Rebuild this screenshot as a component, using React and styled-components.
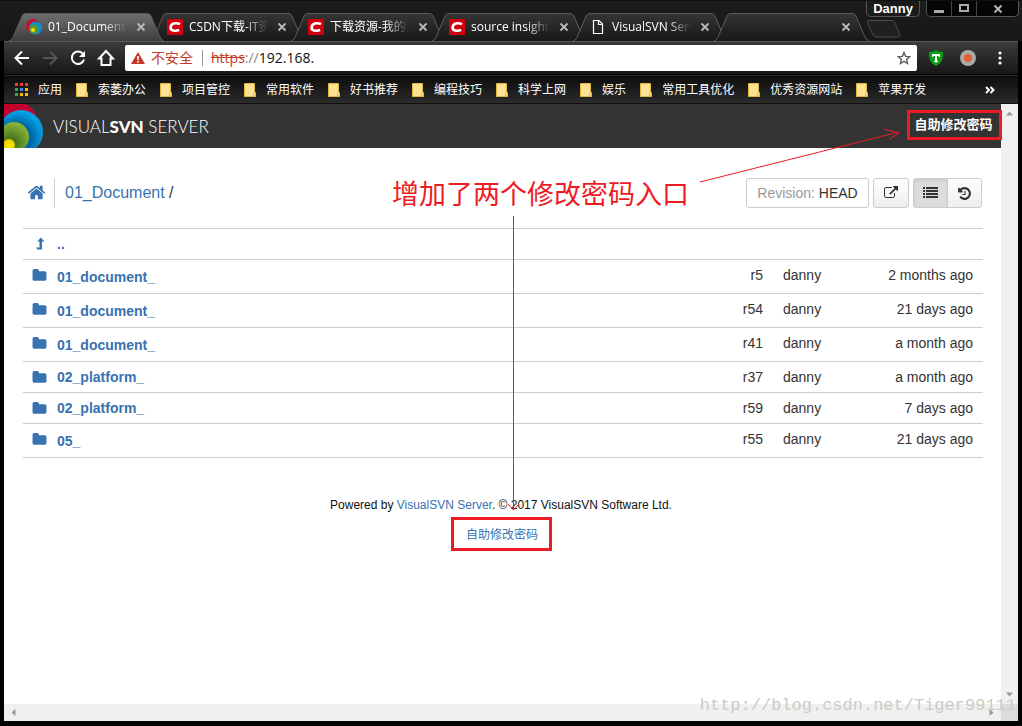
import React from "react";
import styled, { createGlobalStyle, css } from "styled-components";

const ui = `"Open Sans", "Noto Sans", "Noto Sans CJK SC", sans-serif`;
const page = `"Liberation Sans", "Noto Sans CJK SC", sans-serif`;
const link = "#3872b0";
const rule = "#ccc";
const red = "#ed1c24";

const Global = createGlobalStyle`
  * { box-sizing: border-box; }
  body { margin: 0; background: #000; }
  button { font: inherit; color: inherit; cursor: pointer; }
  a { text-decoration: none; }
`;

const Window = styled.div`
  min-height: 100vh;
  display: flex;
  flex-direction: column;
  padding: 0 4px 5px;
  background: #000;
  border-top: 1px solid #111;
  font: 13px/20px ${ui};
  color: #fff;
`;

/* ---------- title bar and tabs ---------- */
const TitleBar = styled.header`
  display: flex;
  align-items: flex-start;
  height: 40px;
  margin: 0 -4px;
  padding-left: 8px;
  background: linear-gradient(#1c1c1c, #171717);
`;
const TabList = styled.nav`
  display: flex;
  align-items: flex-end;
  height: 40px;
  flex: 1;
  min-width: 0;
`;
const TabBox = styled.div`
  display: flex;
  align-items: center;
  flex: 0 0 157px;
  min-width: 0;
  height: 28px;
  margin-right: -16px;
  padding: 0 14px 0 18px;
  position: relative;
  z-index: ${(p) => (p.$active ? 1 : 0)};
`;
const TabShape = styled.svg`
  position: absolute;
  inset: 0;
  width: 100%;
  height: 100%;
  z-index: -1;
`;
const TabIcon = styled.span`
  display: flex;
  width: 16px;
  height: 16px;
  flex: none;
`;
const TabTitle = styled.a`
  flex: 1 1 0;
  min-width: 0;
  margin: 0 4px 0 6px;
  color: #fff;
  font-size: 12px;
  line-height: 20px;
  white-space: nowrap;
  overflow: hidden;
  mask-image: linear-gradient(90deg, #000 70%, transparent);
`;
const IconButton = styled.button`
  display: flex;
  align-items: center;
  justify-content: center;
  flex: none;
  width: ${(p) => p.$w || 28}px;
  height: ${(p) => p.$h || 28}px;
  padding: 0;
  border: 0;
  background: none;
`;
const NewTab = styled(IconButton)`
  margin: 0 0 3px 12px;
`;
const Profile = styled.button`
  flex: none;
  width: 54px;
  height: 16px;
  margin-right: 6px;
  padding: 0;
  border: 1px solid #555;
  border-top: 0;
  border-radius: 0 0 5px 5px;
  background: #1b1b1b;
  font: bold 13px/15px ${page};
`;
const WindowButtons = styled.div`
  display: flex;
  flex: none;
  height: 16px;
  margin-right: 3px;
  border: 1px solid #555;
  border-top: 0;
  border-radius: 0 0 5px 5px;
  background: #050505;
`;
const WindowButton = styled(IconButton)`
  border-left: ${(p) => (p.$first ? 0 : "1px solid #444")};
`;

/* ---------- toolbar ---------- */
const Toolbar = styled.div`
  display: flex;
  align-items: center;
  height: 34px;
  padding: 0 3px 0 4px;
  border-top: 1px solid #5a5a5a;
  border-bottom: 1px solid #000;
  background: linear-gradient(#3b3b3b, #171717);
`;
const Address = styled.div`
  display: flex;
  align-items: center;
  flex: 1;
  height: 26px;
  margin: 0 4px 0 5px;
  padding: 0 6px 0 5px;
  border-radius: 2px;
  background: #fff;
  color: #c53929;
  font-size: 14px;
`;
const Unsafe = styled.span`
  margin: 0 8px 0 5px;
  padding-right: 9px;
  border-right: 1px solid #999;
  line-height: 16px;
`;
const Url = styled.span`
  flex: 1;
  color: #111;
  s { color: #c53929; }
  i { font-style: normal; color: #888; }
`;

/* ---------- bookmarks ---------- */
const Bookmarks = styled.nav`
  display: flex;
  align-items: center;
  height: 29px;
  padding: 0 14px 0 11px;
  border-top: 1px solid #2c2c2c;
  border-bottom: 1px solid #111;
  background: linear-gradient(#0d0d0d, #2b2b2b);
  overflow: hidden;
`;
const Bookmark = styled.a`
  display: flex;
  align-items: center;
  gap: 10px;
  flex: none;
  margin-right: 14px;
  color: #fff;
  font-size: 12px;
  line-height: 20px;
  svg { flex: none; }
`;
const More = styled(IconButton)`
  margin-left: auto;
`;

/* ---------- viewport ---------- */
const Viewport = styled.div`
  flex: 1;
  display: grid;
  grid-template-columns: minmax(0, 1fr) 17px;
  grid-template-rows: 1fr 17px;
  background: #f0f0f0;
  font-family: ${page};
  position: relative;
`;
const Content = styled.main`
  background: #fff;
  color: #333;
  position: relative;
  font-size: 14px;
`;
const Scroll = styled.div`
  display: flex;
  flex-direction: ${(p) => (p.$vertical ? "column" : "row")};
  align-items: center;
  justify-content: space-between;
  padding: ${(p) => (p.$vertical ? "6px 0" : "0 6px")};
`;
const Corner = styled.div`
  background: #dcdcdc;
`;

const Banner = styled.div`
  display: flex;
  align-items: center;
  justify-content: space-between;
  height: 44px;
  background: #333;
  color: #fff;
`;
const Brand = styled.div`
  display: flex;
  align-items: center;
  gap: 10px;
  font: 300 17px/24px Lato, sans-serif;
  span { padding-top: 2px; }
  b { font-weight: 900; }
`;
const marked = css`
  border: 3px solid ${red};
  text-align: center;
`;
const BannerLink = styled.a`
  ${marked}
  width: 95px;
  height: 30px;
  margin: -2px -1px 0 0;
  padding-right: 2px;
  color: #fff;
  font-weight: bold;
  font-size: 13px;
  line-height: 24px;
  white-space: nowrap;
`;
const PathBar = styled.div`
  display: flex;
  align-items: center;
  height: 30px;
  margin: 30px 19px 20px 23px;
`;
const HomeLink = styled.a`
  display: flex;
  padding-bottom: 2px;
`;
const Crumbs = styled.div`
  flex: 1;
  height: 30px;
  margin-left: 8px;
  padding-left: 10px;
  border-left: 1px solid ${rule};
  font-size: 16px;
  line-height: 29px;
  a { color: ${link}; }
`;
const Buttons = styled.div`
  display: flex;
  gap: 4px;
`;
const ButtonPair = styled.div`
  display: flex;
`;
const ToolButton = styled.button`
  display: flex;
  align-items: center;
  justify-content: center;
  height: 30px;
  width: ${(p) => p.$w}px;
  margin-left: ${(p) => (p.$joined ? -1 : 0)}px;
  padding: 0;
  border: 1px solid ${rule};
  border-radius: ${(p) => p.$radius || "3px"};
  background: ${(p) =>
    p.$pressed ? "#dcdcdc" : p.$plain ? "#fff" : "linear-gradient(#fff, #eee)"};
  box-shadow: ${(p) => (p.$pressed ? "inset 0 2px 3px #ccc" : "none")};
  white-space: pre;
  span { color: #999; }
`;
const Listing = styled.table`
  width: calc(100% - 37px);
  margin: 0 18px 0 19px;
  border-collapse: collapse;
  border-bottom: 1px solid ${rule};
  line-height: 20px;
`;
const Row = styled.tr`
  height: ${(p) => p.$h}px;
  border-top: 1px solid ${rule};
`;
const Cell = styled.td`
  width: ${(p) => (p.$w ? p.$w + "px" : "auto")};
  padding: ${(p) => p.$pad || "5px 0"};
  text-align: ${(p) => p.$align || "left"};
  vertical-align: top;
`;
const Entry = styled.a`
  display: flex;
  align-items: flex-start;
  color: ${link};
  font-weight: bold;
  svg { margin: 3px 10px 0 9px; flex: none; }
  span { padding-top: ${(p) => (p.$drop ? 2 : 0)}px; }
`;
const Footer = styled.footer`
  display: flex;
  flex-direction: column;
  align-items: center;
  margin-top: 37px;
  padding-right: 3px;
  color: #111;
  font-size: 12px;
  line-height: 20px;
  a { color: ${link}; }
`;
const FooterLink = styled.a`
  ${marked}
  width: 101px;
  height: 34px;
  margin-top: 2px;
  padding-left: 2px;
  line-height: 30px;
`;

/* ---------- annotations lying over the page ---------- */
const Note = styled.p`
  position: absolute;
  top: 71px;
  left: 388px;
  margin: 0;
  color: ${red};
  font: 27px/36px "Noto Sans CJK SC", sans-serif;
  white-space: nowrap;
`;
const Arrows = styled.svg`
  position: absolute;
  top: 0;
  left: 0;
  pointer-events: none;
`;
const Watermark = styled.div`
  position: absolute;
  right: 2px;
  bottom: 3px;
  color: #cbcbc5;
  font: 17px/24px "Liberation Mono", monospace;
  white-space: nowrap;
`;

/* ---------- icons ---------- */
const FA = {
  home: "M1472 992v480q0 26-19 45t-45 19h-384v-384h-256v384h-384q-26 0-45-19t-19-45v-480q0-1 .5-3t.5-3l575-474 575 474q1 2 1 6zm223-69l-62 74q-8 9-21 11h-3q-13 0-21-7l-692-577-692 577q-12 8-24 7-13-2-21-11l-62-74q-8-10-7-23.5t11-21.5l719-599q32-26 76-26t76 26l244 204v-195q0-14 9-23t23-9h192q14 0 23 9t9 23v408l219 182q10 8 11 21.5t-7 23.5z",
  folder: "M1728 608v704q0 92-66 158t-158 66h-1216q-92 0-158-66t-66-158v-960q0-92 66-158t158-66h320q92 0 158 66t66 158v32h672q92 0 158 66t66 158z",
  external: "M1408 928v320q0 119-84.5 203.5t-203.5 84.5h-832q-119 0-203.5-84.5t-84.5-203.5v-832q0-119 84.5-203.5t203.5-84.5h704q14 0 23 9t9 23v64q0 14-9 23t-23 9h-704q-66 0-113 47t-47 113v832q0 66 47 113t113 47h832q66 0 113-47t47-113v-320q0-14 9-23t23-9h64q14 0 23 9t9 23zm384-864v512q0 26-19 45t-45 19-45-19l-176-176-652 652q-10 10-23 10t-23-10l-114-114q-10-10-10-23t10-23l652-652-176-176q-19-19-19-45t19-45 45-19h512q26 0 45 19t19 45z",
  history: "M1664 896q0 156-61 298t-164 245-245 164-298 61q-172 0-327-72.5t-264-204.5q-7-10-6.5-22.5t8.5-20.5l137-138q10-9 25-9 16 2 23 12 73 95 179 147t225 52q104 0 198.5-40.5t163.5-109.5 109.5-163.5 40.5-198.5-40.5-198.5-109.5-163.5-163.5-109.5-198.5-40.5q-98 0-188 35.5t-160 101.5l137 138q31 30 14 69-17 40-59 40h-448q-26 0-45-19t-19-45v-448q0-42 40-59 39-17 69 14l130 129q107-101 244.5-156.5t284.5-55.5q156 0 298 61t245 164 164 245 61 298zm-640-288v448q0 14-9 23t-23 9h-320q-14 0-23-9t-9-23v-64q0-14 9-23t23-9h224v-352q0-14 9-23t23-9h64q14 0 23 9t9 23z",
};
const Glyph = ({ name, size, color = "currentColor" }) => (
  <svg width={size} height={size} viewBox="0 0 1792 1792" fill={color}>
    <path d={FA[name]} />
  </svg>
);
const LevelUp = () => (
  <svg width="15" height="14" viewBox="0 0 15 14" fill={link}>
    <path d="M4 10.500H7.500V4.500H5.200L8.800.5 12.400 4.500H10V12.500H5.500Z" />
  </svg>
);
const ListIcon = () => (
  <svg width="15" height="14" viewBox="0 0 15 14" fill="#333">
    {[1, 4, 7, 10].map((y) => (
      <g key={y}>
        <rect x="0" y={y} width="2" height="2" />
        <rect x="3" y={y} width="12" height="2" />
      </g>
    ))}
  </svg>
);
const Cross = () => (
  <svg width="10" height="10" stroke="#bbb" strokeWidth="1.8">
    <path d="M1.500 1.500l7 7M8.500 1.500l-7 7" />
  </svg>
);
const SvnMark = () => (
  <svg width="16" height="16" viewBox="0 0 16 16">
    <circle cx="7" cy="7" r="7" fill="#c8102e" />
    <circle cx="9.500" cy="9" r="6.500" fill="#0a8fd6" />
    <circle cx="8" cy="10" r="4.500" fill="#5d9732" />
    <circle cx="7" cy="11" r="2" fill="#f4e100" />
  </svg>
);
const CsdnMark = () => (
  <svg width="16" height="16" viewBox="0 0 16 16">
    <rect width="16" height="16" fill="#d1000f" />
    <path d="M13 5.200C8.500 3 4 4.700 3.600 8.300c-.3 3.300 4 4.200 8.600 2.700" fill="none" stroke="#fff" strokeWidth="2.600" />
  </svg>
);
const PageMark = () => (
  <svg width="16" height="16" viewBox="0 0 16 16" fill="none" stroke="#fff" strokeWidth="1.200">
    <path d="M3.500 1.500h5.500l3.500 3.500v9.500h-9zM8.500 1.500v4h4" />
  </svg>
);
const FolderMark = () => (
  <svg width="12" height="14" viewBox="0 0 12 14">
    <path d="M.5.5h10v9h1v4h-11z" fill="#fde293" stroke="#e0b83e" />
    <path d="M9.500 10.500v3" stroke="#e0b83e" />
  </svg>
);
const AppsMark = () => (
  <svg width="13" height="13" viewBox="0 0 13 13">
    {["#ea4335", "#ea4335", "#ea4335", "#34a853", "#4285f4", "#fbbc05", "#34a853", "#fbbc05", "#fbbc05"].map((c, i) => (
      <rect key={i} x={(i % 3) * 5} y={Math.floor(i / 3) * 5} width="3" height="3" fill={c} />
    ))}
  </svg>
);
const BrandMark = () => (
  <svg width="39" height="44" viewBox="0 0 39 44">
    <defs>
      <radialGradient id="blue" cx=".4" cy=".65" r=".6">
        <stop offset=".6" stopColor="#0068a8" />
        <stop offset="1" stopColor="#059fe3" />
      </radialGradient>
      <radialGradient id="green" cx=".4" cy=".7" r=".65">
        <stop offset=".2" stopColor="#44701f" />
        <stop offset="1" stopColor="#85b136" />
      </radialGradient>
      <radialGradient id="yellow">
        <stop offset="0" stopColor="#fff200" />
        <stop offset="1" stopColor="#e8c800" />
      </radialGradient>
    </defs>
    <path d="M0 0H22Q29 4 32 11L0 20Z" fill="#c4002f" />
    <circle cx="17" cy="28" r="22" fill="url(#blue)" />
    <circle cx="10" cy="33" r="15" fill="url(#green)" />
    <circle cx="5" cy="41" r="6" fill="url(#yellow)" />
  </svg>
);
const Triangle = ({ turn }) => (
  <svg width="7" height="7" viewBox="0 0 7 7" fill="#999">
    <path d="M0 5.500L3.500 1.500 7 5.500z" transform={`rotate(${turn} 3.5 3.5)`} />
  </svg>
);

const tabs = [
  { title: "01_Document_", icon: <SvnMark />, active: true },
  { title: "CSDN下载-IT资源", icon: <CsdnMark /> },
  { title: "下载资源-我的资源", icon: <CsdnMark /> },
  { title: "source insight 4", icon: <CsdnMark /> },
  { title: "VisualSVN Server", icon: <PageMark /> },
  { title: "" },
];
const bookmarks = ["索萎办公", "项目管控", "常用软件", "好书推荐", "编程技巧", "科学上网", "娱乐", "常用工具优化", "优秀资源网站", "苹果开发"];
const rows = [
  ["01_document_", "r5", "2 months ago", true],
  ["01_document_", "r54", "21 days ago", true],
  ["01_document_", "r41", "a month ago", true],
  ["02_platform_", "r37", "a month ago", false],
  ["02_platform_", "r59", "7 days ago", false],
  ["05_", "r55", "21 days ago", true],
];

const Tab = ({ title, icon, active }) => (
  <TabBox $active={active}>
    <TabShape viewBox="0 0 157 28" preserveAspectRatio="none">
      <defs>
        <linearGradient id={active ? "tabOn" : "tabOff"} x2="0" y2="1">
          <stop stopColor={active ? "#6e6e6e" : "#353535"} />
          <stop offset="1" stopColor={active ? "#3e3e3e" : "#181818"} />
        </linearGradient>
      </defs>
      <path
        d="M1 28C4 27 5 25 6 22L14 3Q15 .5 18 .5H139Q142 .5 143 3L151 22Q153 27 156 28"
        fill={active ? "url(#tabOn)" : "url(#tabOff)"}
        stroke="#5c5c5c"
      />
    </TabShape>
    {icon && <TabIcon>{icon}</TabIcon>}
    <TabTitle href="#">{title}</TabTitle>
    <IconButton $w={20} $h={20} aria-label="Close tab"><Cross /></IconButton>
  </TabBox>
);

export default function App() {
  return (
    <Window>
      <Global />
      <TitleBar>
        <TabList>
          {tabs.map((t, i) => <Tab key={i} {...t} />)}
          <NewTab $w={36} $h={18} aria-label="New tab">
            <svg width="36" height="18" fill="#202020" stroke="#4a4a4a">
              <path d="M3 .5H26Q28 .5 29 3L34 15Q34 17 32 17H10Q8 17 7 15L1.500 3Q1 .5 3 .5z" />
            </svg>
          </NewTab>
        </TabList>
        <Profile>Danny</Profile>
        <WindowButtons>
          <WindowButton $first $w={24} $h={15} aria-label="Minimize">
            <svg width="10" height="10"><rect y="6" width="10" height="3" fill="#aaa" /></svg>
          </WindowButton>
          <WindowButton $w={25} $h={15} aria-label="Maximize">
            <svg width="10" height="10"><rect x="1" y="1" width="8" height="6" fill="none" stroke="#aaa" strokeWidth="2" /></svg>
          </WindowButton>
          <WindowButton $w={42} $h={15} aria-label="Close"><Cross /></WindowButton>
        </WindowButtons>
      </TitleBar>

      <Toolbar>
        <IconButton aria-label="Back">
          <svg width="16" height="16" fill="none" stroke="#fff" strokeWidth="2"><path d="M15 8H2M8 1.500L1.500 8 8 14.500" /></svg>
        </IconButton>
        <IconButton aria-label="Forward">
          <svg width="16" height="16" fill="none" stroke="#555" strokeWidth="2"><path d="M1 8h13M8 1.500L14.500 8 8 14.500" /></svg>
        </IconButton>
        <IconButton aria-label="Reload">
          <svg width="16" height="16" fill="none" stroke="#fff" strokeWidth="2"><path d="M13 4A6.200 6.200 0 1 0 14 9.500" /><path d="M15 1v6H9z" fill="#fff" stroke="none" /></svg>
        </IconButton>
        <IconButton aria-label="Home">
          <svg width="18" height="18" fill="none" stroke="#fff" strokeWidth="2"><path d="M9 2L2 9.500H4.500V16H13.500V9.500H16z" /></svg>
        </IconButton>
        <Address>
          <svg width="16" height="16"><path d="M8 2L15 14H1z" fill="#c53929" /><path d="M7.200 6h1.600v4H7.200zM7.200 11h1.600v1.600H7.200z" fill="#fff" /></svg>
          <Unsafe>不安全</Unsafe>
          <Url><s>https</s><i>://</i>192.168.</Url>
          <svg width="14" height="14" viewBox="0 0 14 14" fill="none" stroke="#555" strokeWidth="1.300"><path d="M7 1.500L8.600 5.300 12.800 5.700 9.600 8.400 10.600 12.500 7 10.300 3.400 12.500 4.400 8.400 1.200 5.700 5.400 5.300z" /></svg>
        </Address>
        <IconButton $w={30} aria-label="Shield extension">
          <svg width="16" height="16"><path d="M1 2Q5 2 8 0 11 2 15 2C15 9 14 13 8 16 2 13 1 9 1 2z" fill="#0a9f16" /><path d="M4 4h8v3h-1.200V6H9v5h1v1.300H6V11h1V6H5.200v1H4z" fill="#fff" /></svg>
        </IconButton>
        <IconButton $w={34} aria-label="Recorder extension">
          <svg width="16" height="16"><circle cx="8" cy="8" r="8" fill="#aaa" /><circle cx="8" cy="8" r="4" fill="#e0622e" /></svg>
        </IconButton>
        <IconButton $w={30} aria-label="Menu">
          <svg width="4" height="14" fill="#fff"><circle cx="2" cy="2" r="1.600" /><circle cx="2" cy="7" r="1.600" /><circle cx="2" cy="12" r="1.600" /></svg>
        </IconButton>
      </Toolbar>

      <Bookmarks>
        <Bookmark href="#"><AppsMark />应用</Bookmark>
        {bookmarks.map((b) => <Bookmark key={b} href="#"><FolderMark />{b}</Bookmark>)}
        <More $h={20} aria-label="More bookmarks">
          <svg width="10" height="8" fill="none" stroke="#fff" strokeWidth="2"><path d="M1 1l3 3-3 3M5.500 1l3 3-3 3" /></svg>
        </More>
      </Bookmarks>

      <Viewport>
        <Content>
          <Banner>
            <Brand><BrandMark /><span>VISUAL<b>SVN</b> SERVER</span></Brand>
            <BannerLink href="#">自助修改密码</BannerLink>
          </Banner>
          <PathBar>
            <HomeLink href="#" aria-label="Home"><Glyph name="home" size={19} color={link} /></HomeLink>
            <Crumbs><a href="#">01_Document</a> /</Crumbs>
            <Buttons>
              <ToolButton $w={123} $plain><span>Revision: </span>HEAD</ToolButton>
              <ToolButton $w={36} aria-label="Open"><Glyph name="external" size={14} /></ToolButton>
              <ButtonPair>
                <ToolButton $w={35} $pressed $radius="3px 0 0 3px" aria-label="List"><ListIcon /></ToolButton>
                <ToolButton $w={35} $joined $radius="0 3px 3px 0" aria-label="History"><Glyph name="history" size={15} /></ToolButton>
              </ButtonPair>
            </Buttons>
          </PathBar>
          <Listing>
            <tbody>
              <Row $h={31}>
                <Cell colSpan={4}><Entry href="#"><LevelUp /><span>..</span></Entry></Cell>
              </Row>
              {rows.map(([name, rev, age, tall], i) => (
                <Row key={i} $h={tall ? 34 : 31}>
                  <Cell><Entry href="#" $drop={tall}><Glyph name="folder" size={15} /><span>{name}</span></Entry></Cell>
                  <Cell $w={60} $align="right">{rev}</Cell>
                  <Cell $w={80} $pad="5px 0 5px 20px">danny</Cell>
                  <Cell $w={140} $align="right" $pad="5px 10px 5px 0">{age}</Cell>
                </Row>
              ))}
            </tbody>
          </Listing>
          <Footer>
            <div>Powered by <a href="#">VisualSVN Server</a>. © 2017 VisualSVN Software Ltd.</div>
            <FooterLink href="#">自助修改密码</FooterLink>
          </Footer>
          <Note>增加了两个修改密码入口</Note>
          <Arrows width="997" height="420" fill="none" stroke={red}>
            <path d="M696 78L895 28M880 25L895 29 886 35" />
            <path d="M509.500 112V406M504 400l5.500 6 5.500-6" />
          </Arrows>
        </Content>
        <Scroll $vertical><Triangle turn={0} /><Triangle turn={180} /></Scroll>
        <Scroll><Triangle turn={-90} /><Triangle turn={90} /></Scroll>
        <Corner />
        <Watermark>http://blog.csdn.net/Tiger99111</Watermark>
      </Viewport>
    </Window>
  );
}
